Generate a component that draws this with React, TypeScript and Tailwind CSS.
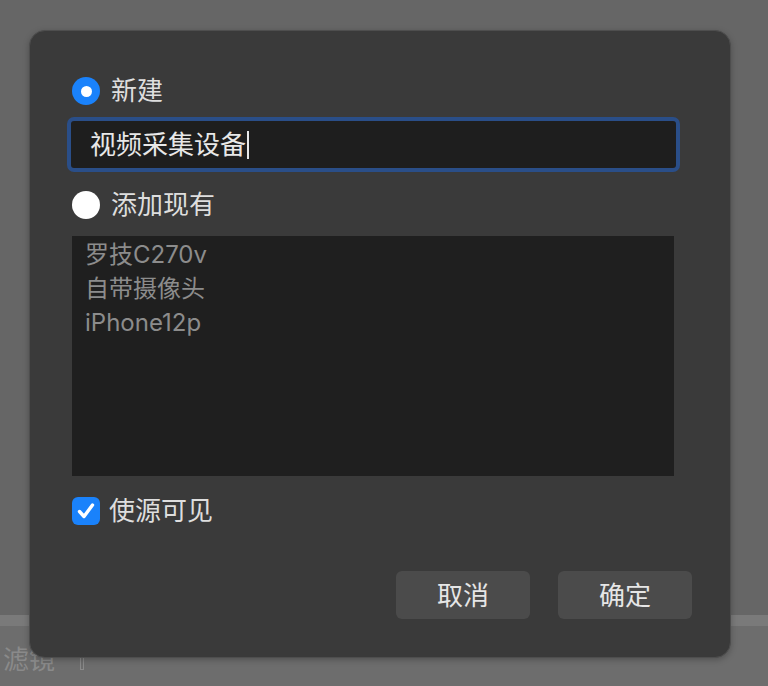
import React from 'react';

const font = { fontFamily: 'Inter, "Noto Sans CJK SC", sans-serif' };

const items = ['罗技C270v', '自带摄像头', 'iPhone12p'];

const App = () => {
  return (
    <div className="relative w-[768px] h-[686px] overflow-hidden bg-[#666666] flex flex-col" style={font}>
      {/* page behind the dialog */}
      <div className="flex-1" />
      <div className="h-[11px] bg-[#7a7a7a]" />
      <div className="h-[60px] bg-[#6d6d6d] flex items-start pt-[18px] pl-[3px] gap-[25px]">
        <span className="text-[26px] leading-[32px] text-[#8a8a8a]">滤镜</span>
        <div className="mt-[4px] w-[4px] h-[22px] border border-[#8a8a8a]" />
      </div>

      {/* dialog */}
      <div className="absolute left-[29px] top-[30px] w-[702px] h-[628px] rounded-[16px] bg-[#3a3a3a] border border-[#4e4e4e] shadow-[0_2px_6px_rgba(0,0,0,0.25)] flex flex-col pl-[42px] pr-[38px] pt-[46px]">
        <div className="flex items-center h-[28px] gap-[11px]">
          <div className="w-[28px] h-[28px] rounded-full bg-[#1a82fb] flex items-center justify-center">
            <div className="w-[11px] h-[11px] rounded-full bg-white" />
          </div>
          <span className="text-[26px] leading-none text-[#dedede]">新建</span>
        </div>

        <div className="mt-[12px] -ml-[5px] w-[613px] h-[55px] rounded-[7px] border-[4px] border-[#2a4e88] bg-[#1e1e1e] flex items-center pl-[19px]">
          <span className="text-[26px] leading-none text-[#e8e8e8]">视频采集设备</span>
          <div className="ml-[1px] w-[2px] h-[28px] bg-[#e8e8e8]" />
        </div>

        <div className="mt-[19px] flex items-center h-[28px] gap-[11px]">
          <div className="w-[28px] h-[28px] rounded-full bg-white" />
          <span className="text-[26px] leading-none text-[#dedede]">添加现有</span>
        </div>

        <div className="mt-[17px] w-[602px] h-[240px] bg-[#1f1f1f] flex flex-col pl-[13px] pt-[2px]">
          {items.map((it) => (
            <div key={it} className="h-[34px] flex items-center text-[24px] text-[#8c8c8c]">
              {it}
            </div>
          ))}
        </div>

        <div className="mt-[21px] flex items-center h-[28px] gap-[9px]">
          <div className="w-[28px] h-[28px] rounded-[6px] bg-[#1a82fb] flex items-center justify-center">
            <svg width="22" height="22" viewBox="0 0 22 22" fill="none">
              <path d="M4.5 11.5 L9 16.5 L17.5 5" stroke="white" strokeWidth="3.4" strokeLinecap="round" strokeLinejoin="round" />
            </svg>
          </div>
          <span className="text-[26px] leading-none text-[#dedede]">使源可见</span>
        </div>

        <div className="mt-[46px] flex justify-end gap-[28px]">
          <button className="w-[134px] h-[48px] rounded-[6px] bg-[#4b4b4b] text-[26px] text-[#e6e6e6]">取消</button>
          <button className="w-[134px] h-[48px] rounded-[6px] bg-[#4b4b4b] text-[26px] text-[#e6e6e6]">确定</button>
        </div>
      </div>
    </div>
  );
};

export default App;
